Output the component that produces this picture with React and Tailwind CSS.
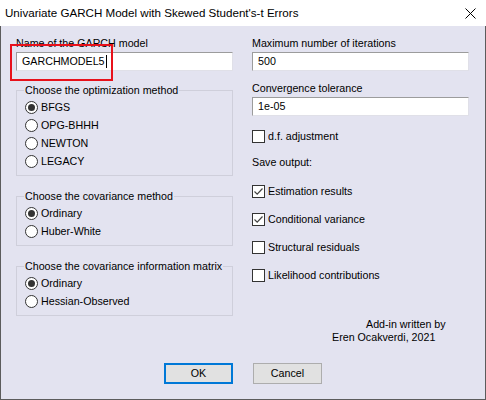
import React from 'react'

const font = { fontFamily: '"Liberation Sans", Arial, sans-serif' }

const Radio = ({ label, checked }) => (
  <div className="h-[18px] flex items-center">
    <span className="w-[13px] h-[13px] rounded-full border border-[#333] bg-white flex items-center justify-center">
      {checked && <span className="w-[7px] h-[7px] rounded-full bg-[#333]" />}
    </span>
    <span className="ml-[3px] text-[10.7px] leading-[14px]">{label}</span>
  </div>
)

const Check = ({ label, checked }) => (
  <div className="h-[14px] flex items-center">
    <span className="w-[13px] h-[13px] border border-[#333] bg-white flex items-center justify-center">
      {checked && (
        <svg width="11" height="11" viewBox="0 0 11 11">
          <path d="M1.5 5.5 L4.2 8.2 L9.5 2.5" fill="none" stroke="#444" strokeWidth="1.2" />
        </svg>
      )}
    </span>
    <span className="ml-[3px] text-[10.7px] leading-[14px]">{label}</span>
  </div>
)

const Group = ({ title, children, className = '' }) => (
  <fieldset className={`border border-[#cfcfdb] pl-[8px] pt-[1px] pb-[5px] ${className}`}>
    <legend className="ml-[-1px] px-[1px] text-[10.7px] leading-[14px] whitespace-nowrap">{title}</legend>
    {children}
  </fieldset>
)

const Field = ({ value, children }) => (
  <div className="relative h-[19px] bg-white border border-[#e0e0e8] border-t-[#9c9c9c] border-l-[#9c9c9c] flex items-center pl-[5px] text-[10.7px]">
    {value}
    {children}
  </div>
)

export default function App() {
  return (
    <div style={font} className="w-[486px] h-[400px] flex flex-col text-black bg-white">
      <div className="h-[26px] bg-white flex items-center justify-between pl-[5px] pr-[10px]">
        <span className="text-[11.6px]">Univariate GARCH Model with Skewed Student's-t Errors</span>
        <svg width="11" height="11" viewBox="0 0 11 11">
          <path d="M0.5 0.5 L10.5 10.5 M10.5 0.5 L0.5 10.5" stroke="#000" strokeWidth="1" />
        </svg>
      </div>
      <div className="flex-1 bg-[#e3e3f0] border-l border-r border-b border-[#5c5c5c] flex flex-col">
        <div className="flex pl-[15px] pt-[10px] gap-[19px]">
          <div className="w-[217px] flex flex-col">
            <div className="text-[10.7px] leading-[14px]">Name of the GARCH model</div>
            <div className="relative mt-[2px]">
              <Field value="GARCHMODEL5">
                <span className="w-px h-[13px] bg-black ml-[1px]" />
              </Field>
              <div className="absolute left-[-6px] top-[-8px] w-[103px] h-[37px] border-2 border-[#e8111b]" />
            </div>
            <Group title="Choose the optimization method" className="mt-[12px]">
              <Radio label="BFGS" checked />
              <Radio label="OPG-BHHH" />
              <Radio label="NEWTON" />
              <Radio label="LEGACY" />
            </Group>
            <Group title="Choose the covariance method" className="mt-[13px]">
              <Radio label="Ordinary" checked />
              <Radio label="Huber-White" />
            </Group>
            <Group title="Choose the covariance information matrix" className="mt-[13px]">
              <Radio label="Ordinary" checked />
              <Radio label="Hessian-Observed" />
            </Group>
          </div>
          <div className="w-[217px] flex flex-col">
            <div className="text-[10.7px] leading-[14px]">Maximum number of iterations</div>
            <div className="mt-[2px]">
              <Field value="500" />
            </div>
            <div className="mt-[10px] text-[10.7px] leading-[14px]">Convergence tolerance</div>
            <div className="mt-[2px]">
              <Field value="1e-05" />
            </div>
            <div className="mt-[13px]">
              <Check label="d.f. adjustment" />
            </div>
            <div className="mt-[12px] text-[10.7px] leading-[14px]">Save output:</div>
            <div className="mt-[15px] flex flex-col gap-[14px]">
              <Check label="Estimation results" checked />
              <Check label="Conditional variance" checked />
              <Check label="Structural residuals" />
              <Check label="Likelihood contributions" />
            </div>
            <div className="mt-[36px] text-[10.7px] leading-[13px]">
              <div className="ml-[114px]">Add-in written by</div>
              <div className="ml-[80px]">Eren Ocakverdi, 2021</div>
            </div>
          </div>
        </div>
        <div className="mt-auto mb-[15px] flex pl-[163px] gap-[20px]">
          <button className="w-[69px] h-[21px] bg-[#e1e1e1] border-2 border-[#0078d7] text-[10.7px]">OK</button>
          <button className="w-[69px] h-[21px] bg-[#e1e1e1] border border-[#adadad] text-[10.7px]">Cancel</button>
        </div>
      </div>
    </div>
  )
}
